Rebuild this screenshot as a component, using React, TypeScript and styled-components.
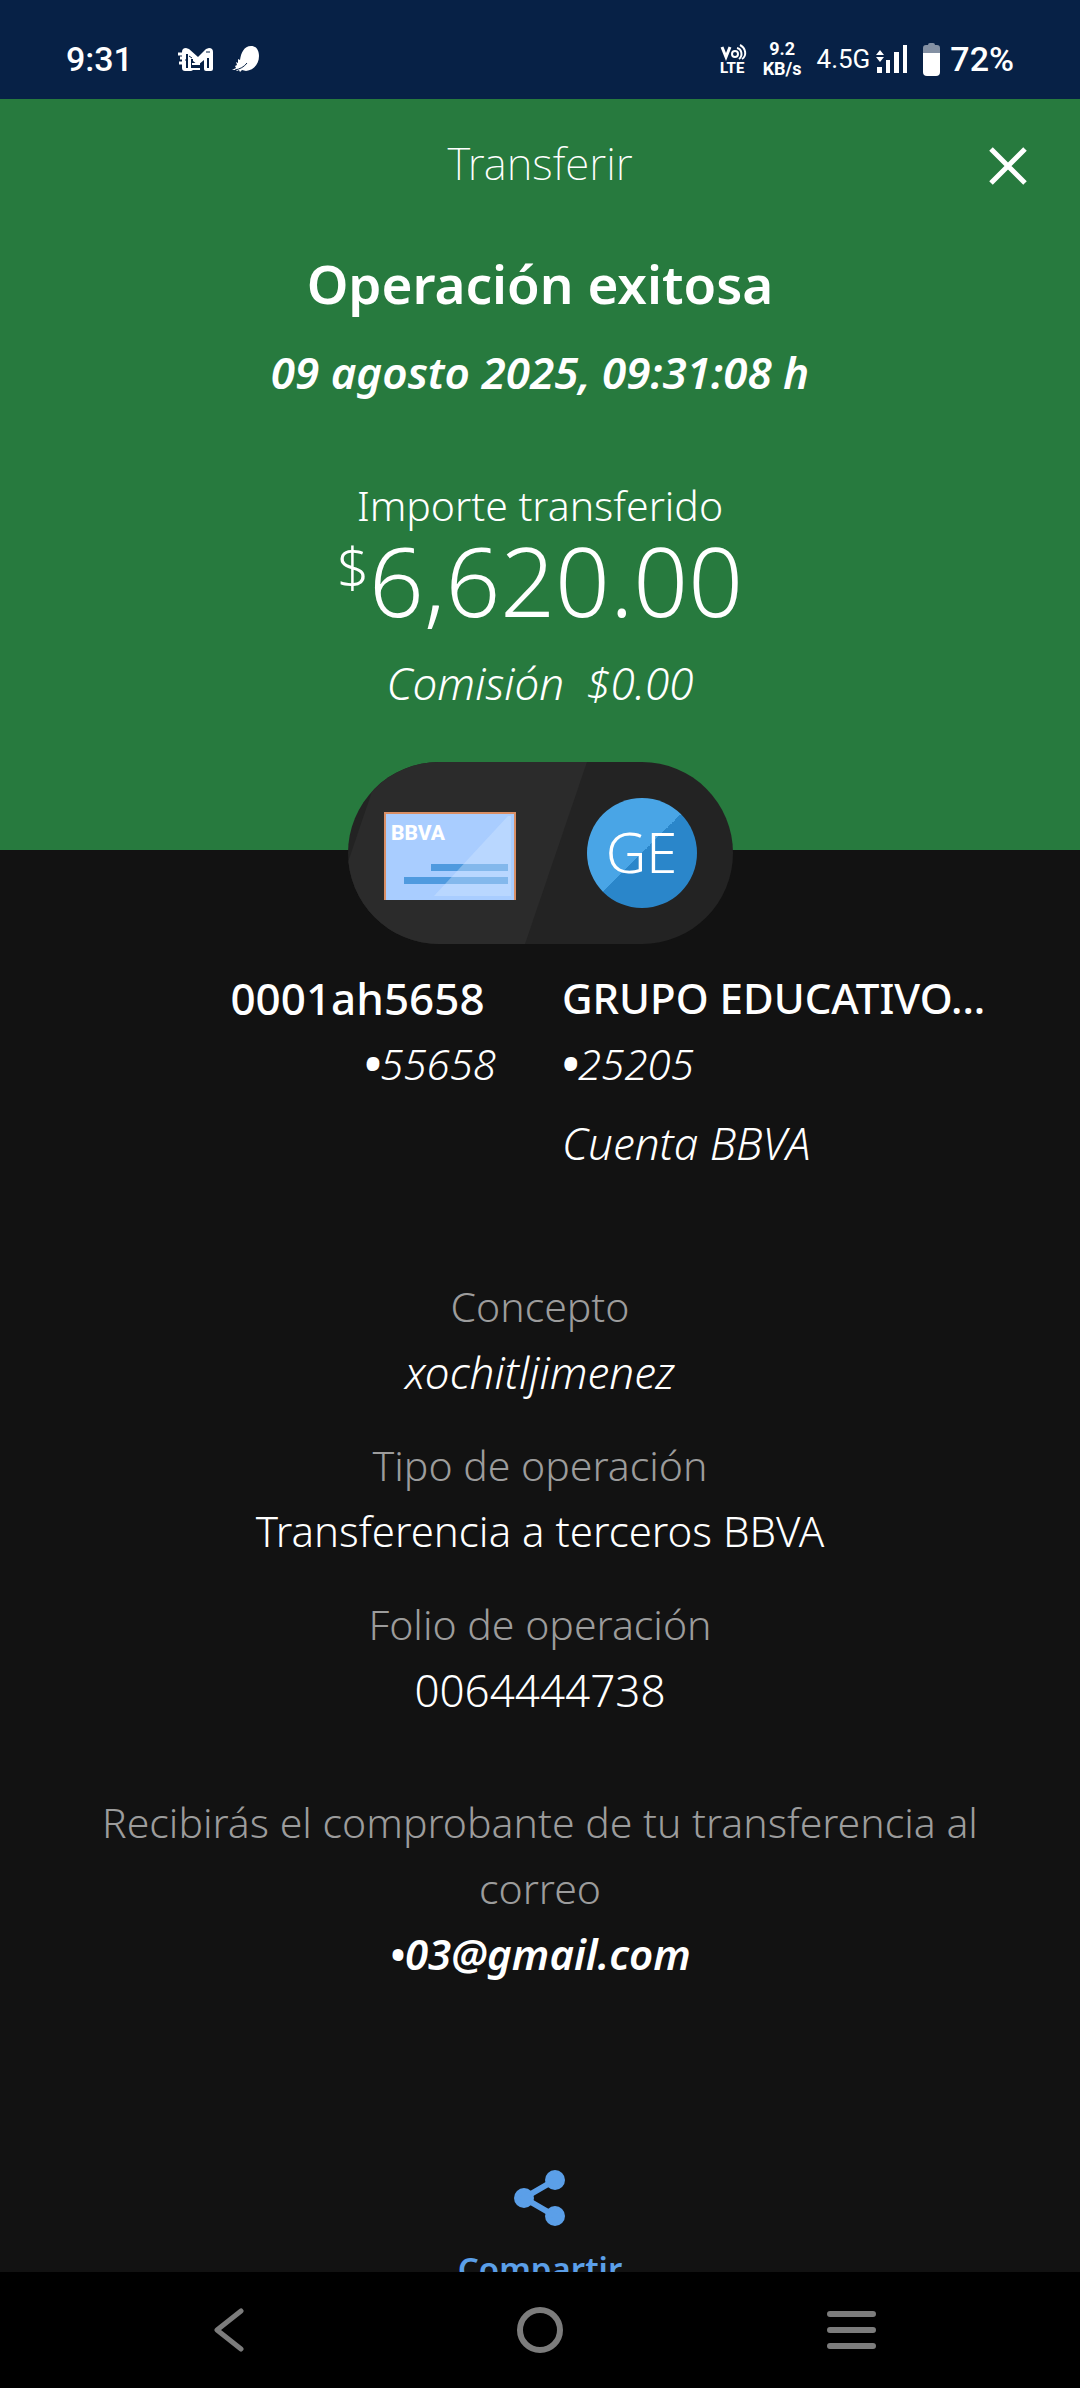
import React from 'react';
import styled, { createGlobalStyle } from 'styled-components';

const GlobalStyle = createGlobalStyle`
  *, *::before, *::after { box-sizing: border-box; }
  body { margin: 0; background: #121212; }
  button { margin: 0; padding: 0; border: 0; background: none; color: inherit; font: inherit; }
  h1, h2, p, dl, dt, dd { margin: 0; font-weight: inherit; }
  svg { display: block; }
`;

const Screen = styled.div`
  height: 100vh;
  display: flex;
  flex-direction: column;
  background: #121212;
  color: #fff;
  font-family: 'Noto Sans', 'Open Sans', sans-serif;
  font-size: 42px;
  font-weight: 300;
  line-height: 66px;
`;

/* ---------- status bar ---------- */

const StatusBar = styled.header`
  flex: none;
  height: 99px;
  padding: 18px 66px 0 66px;
  display: flex;
  align-items: center;
  justify-content: space-between;
  background: #072146;
  font-family: Roboto, sans-serif;
  font-weight: 500;
`;

const StatusGroup = styled.div<{ $gap: number }>`
  display: flex;
  align-items: center;
  gap: ${(p) => p.$gap}px;
`;

const StatusText = styled.span<{ $size: number; $weight?: number }>`
  font-size: ${(p) => p.$size}px;
  font-weight: ${(p) => p.$weight ?? 500};
  line-height: 40px;
`;

const StackedText = styled.span`
  display: flex;
  flex-direction: column;
  align-items: center;
  font-size: 18px;
  font-weight: 700;
  line-height: 20px;
`;

/* ---------- result header ---------- */

const Scroll = styled.main`
  flex: 1;
  min-height: 0;
  overflow: hidden;
`;

const Result = styled.section`
  padding: 34px 48px 134px;
  background: #277a3e;
  text-align: center;
`;

const TitleBar = styled.div`
  display: grid;
  grid-template-columns: 48px 1fr 48px;
  align-items: center;
  margin-bottom: 58px;
`;

const Title = styled.h1`
  grid-column: 2;
  font-size: 44px;
  font-weight: 200;
  line-height: 60px;
`;

const CloseButton = styled.button`
  justify-self: center;
  padding-top: 6px;
`;

const Headline = styled.h2`
  font-size: 53px;
  font-weight: 600;
`;

const DateLine = styled.p`
  margin: 22px 0 67px;
  font-size: 44px;
  font-style: italic;
  font-weight: 600;
`;

const Caption = styled.p`
  font-size: 41px;
`;

const Amount = styled.p`
  display: flex;
  justify-content: center;
  align-items: flex-start;
  margin-bottom: 28px;
  font-size: 96px;
  line-height: 84px;
`;

const Currency = styled.span`
  font-size: 56px;
  line-height: 56px;
`;

const Fee = styled.p`
  display: flex;
  justify-content: center;
  gap: 22px;
  font-size: 44px;
  font-style: italic;
`;

/* ---------- origin and destination ---------- */

const Pill = styled.div`
  position: relative;
  width: 385px;
  height: 182px;
  margin: -88px auto 21px;
  padding: 0 36px;
  display: flex;
  align-items: center;
  justify-content: space-between;
  border-radius: 91px;
  overflow: hidden;
  background: #232323;
`;

const PillShade = styled.svg`
  position: absolute;
  inset: 0;
`;

const CardArt = styled.svg`
  position: relative;
`;

const Avatar = styled.div`
  position: relative;
  width: 110px;
  height: 110px;
  border-radius: 50%;
  background: linear-gradient(135deg, #49a5e6 50%, #2a86ca 50%);
  font-size: 56px;
  line-height: 106px;
  text-align: center;
`;

const Accounts = styled.section`
  display: grid;
  grid-template-columns: 406fr 428fr;
  column-gap: 66px;
  padding: 0 90px;
`;

const Account = styled.div<{ $align: 'left' | 'right' }>`
  min-width: 0;
  text-align: ${(p) => p.$align};
`;

const AccountName = styled.p<{ $size?: number }>`
  font-size: ${(p) => p.$size ?? 42}px;
  font-weight: 500;
  white-space: nowrap;
`;

const AccountNumber = styled.p`
  font-style: italic;
`;

const Mask = styled.span`
  font-weight: 800;
`;

const AccountKind = styled.p`
  margin-top: 13px;
  font-size: 44px;
  font-style: italic;
`;

/* ---------- details ---------- */

const Details = styled.dl`
  display: flex;
  flex-direction: column;
  gap: 27px;
  margin: 97px 90px 66px;
  text-align: center;
`;

const Label = styled.dt`
  color: #9c9c9c;
  font-size: 41px;
`;

const Value = styled.dd<{ $italic?: boolean; $size?: number }>`
  font-size: ${(p) => p.$size ?? 42}px;
  font-style: ${(p) => (p.$italic ? 'italic' : 'normal')};
`;

const Receipt = styled.p`
  padding: 0 90px;
  color: #9c9c9c;
  font-size: 41px;
  text-align: center;
`;

const Email = styled.p`
  font-style: italic;
  font-weight: 600;
  text-align: center;
`;

const ShareButton = styled.button`
  display: flex;
  flex-direction: column;
  align-items: center;
  gap: 13px;
  margin: 183px auto 0;
  color: #5b9fe8;
  font-size: 33px;
  font-weight: 600;
  line-height: 60px;
`;

/* ---------- navigation ---------- */

const NavBar = styled.nav`
  flex: none;
  height: 116px;
  padding: 0 193px;
  display: flex;
  align-items: center;
  justify-content: space-between;
  background: #000;
  color: #7c7c7c;
`;

const NavButton = styled.button`
  width: 72px;
  display: flex;
  justify-content: center;
`;

const MailIcon = () => (
  <svg width="36" height="26" viewBox="0 0 36 26" aria-hidden="true">
    <path d="M4 6q0-4 4-4l3 1 9 8 8-8 3-1q4 0 4 4v17q0 2-2 2h-5q-2 0-2-2v-9l-6 5-5-4v8q0 2-2 2H7q-3 0-3-3z" fill="#fff" />
    <path d="M0 8h6M1 17h6M2 12h3" stroke="#fff" strokeWidth="3" />
    <path d="M9 8v14M14 13v9M30 12v10" stroke="#072146" strokeWidth="2" />
    <path d="M28 6h4M11 10l3 2M7 14h3" stroke="#072146" strokeWidth="1" />
    <path d="M14 18h8M14 23h8" stroke="#fff" strokeWidth="2" />
  </svg>
);

const FeatherIcon = () => (
  <svg width="28" height="28" viewBox="0 0 28 28" aria-hidden="true">
    <path d="M0 25l4-2-1-2 2-1-1-3 2 1 0-4 2 1C9 8 12 1 19 1c5 0 8 4 8 10 0 8-5 14-13 15l-4-1-2 2-1-2-2 1-1-1z" fill="#fff" />
    <path d="M3 25c5-1 9-3 12-7" stroke="#072146" fill="none" strokeWidth="1" />
  </svg>
);

const VolteIcon = () => (
  <svg width="28" height="36" viewBox="0 -3 28 36" aria-hidden="true">
    <g fill="none" stroke="#fff">
      <path d="M2 3l4 10 4-10" strokeWidth="3" />
      <circle cx="15" cy="10" r="3" strokeWidth="2" />
      <path d="M17 4c5 1 6 8 2 11M20 1c6 3 7 11 2 14" strokeWidth="2" />
    </g>
    <text x="0" y="29" fill="#fff" fontFamily="Roboto, sans-serif" fontSize="15" fontWeight="800">LTE</text>
  </svg>
);

const SignalIcon = () => (
  <svg width="32" height="30" viewBox="0 0 32 30" fill="#fff" aria-hidden="true">
    <path d="M4 6l4 5H0zM4 18l4-5H0zM1 23h5v6H1zM10 16h4v13h-4zM18 8h5v21h-5zM27 1h4v28h-4z" />
  </svg>
);

const BatteryIcon = () => (
  <svg width="17" height="34" viewBox="0 0 17 34" aria-hidden="true">
    <path d="M0 11V6q0-3 3-3h2q0-2 2-2h3q2 0 2 2h2q3 0 3 3v5z" fill="#8390a3" />
    <path d="M0 11h17v19q0 4-4 4H4q-4 0-4-4z" fill="#fff" />
  </svg>
);

const details = [
  { label: 'Concepto', value: 'xochitljimenez', italic: true, size: 44 },
  { label: 'Tipo de operación', value: 'Transferencia a terceros BBVA' },
  { label: 'Folio de operación', value: '0064444738', size: 44 },
];

export default function App() {
  return (
    <Screen>
      <GlobalStyle />
      <StatusBar>
        <StatusGroup $gap={45}>
          <StatusText $size={34}>9:31</StatusText>
          <StatusGroup $gap={18}>
            <MailIcon />
            <FeatherIcon />
          </StatusGroup>
        </StatusGroup>
        <StatusGroup $gap={15}>
          <VolteIcon />
          <StackedText>
            <span>9.2</span>
            <span>KB/s</span>
          </StackedText>
          <StatusGroup $gap={6}>
            <StatusText $size={26} $weight={400}>4.5G</StatusText>
            <SignalIcon />
          </StatusGroup>
          <StatusGroup $gap={10}>
            <BatteryIcon />
            <StatusText $size={34}>72%</StatusText>
          </StatusGroup>
        </StatusGroup>
      </StatusBar>

      <Scroll>
        <Result>
          <TitleBar>
            <Title>Transferir</Title>
            <CloseButton aria-label="Cerrar">
              <svg width="38" height="38" viewBox="0 0 38 38" fill="none" stroke="#fff" strokeWidth="5">
                <path d="M2 2l34 34M36 2L2 36" />
              </svg>
            </CloseButton>
          </TitleBar>
          <Headline>Operación exitosa</Headline>
          <DateLine>09 agosto 2025, 09:31:08 h</DateLine>
          <Caption>Importe transferido</Caption>
          <Amount>
            <Currency>$</Currency>6,620.00
          </Amount>
          <Fee>
            <span>Comisión</span>
            <span>$0.00</span>
          </Fee>
        </Result>

        <Pill>
          <PillShade width="385" height="182" viewBox="0 0 385 182" aria-hidden="true">
            <path d="M34 0H239L177 182H0V100z" fill="#2b2b2b" />
          </PillShade>
          <CardArt width="132" height="94" viewBox="0 -6 132 94" aria-hidden="true">
            <path d="M0 0h132v88H0z" fill="#a9cdff" />
            <path d="M47 52h77v7H47zM20 65h104v7H20z" fill="#4f9adf" />
            <path d="M124 4h3v80H50z" fill="#d3e5ff" opacity=".4" />
            <path d="M1 88V1h130v87" fill="none" stroke="#d98f66" strokeWidth="2" />
            <text x="7" y="28" fill="#fff" fontFamily="Roboto, sans-serif" fontSize="21" fontWeight="800">BBVA</text>
          </CardArt>
          <Avatar>GE</Avatar>
        </Pill>

        <Accounts>
          <Account $align="right">
            <AccountName $size={44}>0001ah5658&nbsp;</AccountName>
            <AccountNumber><Mask>•</Mask>55658</AccountNumber>
          </Account>
          <Account $align="left">
            <AccountName>GRUPO EDUCATIVO...</AccountName>
            <AccountNumber><Mask>•</Mask>25205</AccountNumber>
            <AccountKind>Cuenta BBVA</AccountKind>
          </Account>
        </Accounts>

        <Details>
          {details.map((d) => (
            <div key={d.label}>
              <Label>{d.label}</Label>
              <Value $italic={d.italic} $size={d.size}>{d.value}</Value>
            </div>
          ))}
        </Details>

        <Receipt>Recibirás el comprobante de tu transferencia al correo</Receipt>
        <Email>•03@gmail.com</Email>

        <ShareButton>
          <svg width="52" height="56" viewBox="0 0 52 56" fill="currentColor" aria-hidden="true">
            <circle cx="10" cy="28" r="10" />
            <circle cx="41" cy="10" r="10" />
            <circle cx="41" cy="46" r="10" />
            <path d="M41 10L10 28l31 18" fill="none" stroke="currentColor" strokeWidth="6" />
          </svg>
          Compartir
        </ShareButton>
      </Scroll>

      <NavBar>
        <NavButton aria-label="Atrás">
          <svg width="30" height="44" viewBox="0 0 30 44" fill="none" stroke="currentColor" strokeWidth="5" strokeLinecap="round" strokeLinejoin="round">
            <path d="M27 3L3 22l24 19" />
          </svg>
        </NavButton>
        <NavButton aria-label="Inicio">
          <svg width="48" height="48" viewBox="0 0 48 48" fill="none" stroke="currentColor" strokeWidth="6">
            <circle cx="24" cy="24" r="20" />
          </svg>
        </NavButton>
        <NavButton aria-label="Recientes">
          <svg width="49" height="38" viewBox="0 0 49 38" fill="none" stroke="currentColor" strokeWidth="6" strokeLinecap="round">
            <path d="M3 3h43M3 19h43M3 35h43" />
          </svg>
        </NavButton>
      </NavBar>
    </Screen>
  );
}
